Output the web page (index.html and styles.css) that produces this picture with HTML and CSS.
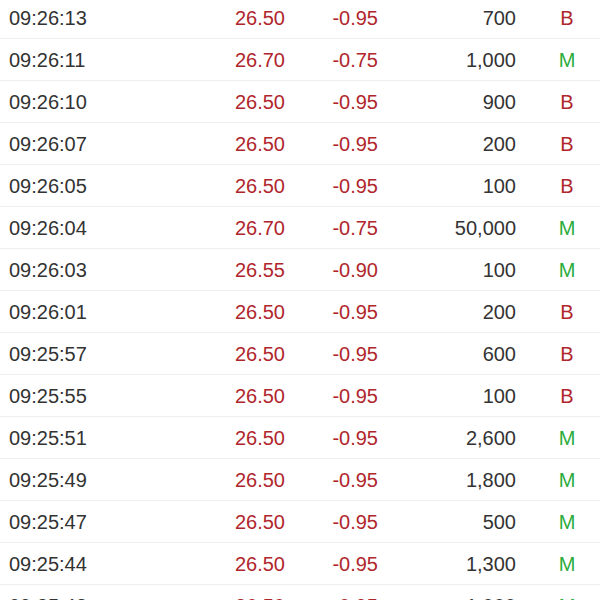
FILE: index.html
```html
<!DOCTYPE html>
<html>
<head>
<meta charset="utf-8">
<link rel="stylesheet" href="styles.css">
</head>
<body>
<div class="list">
  <div class="row"><span class="time">09:26:13</span><span class="price">26.50</span><span class="chg">-0.95</span><span class="vol">700</span><span class="side b">B</span></div>
  <div class="row"><span class="time">09:26:11</span><span class="price">26.70</span><span class="chg">-0.75</span><span class="vol">1,000</span><span class="side m">M</span></div>
  <div class="row"><span class="time">09:26:10</span><span class="price">26.50</span><span class="chg">-0.95</span><span class="vol">900</span><span class="side b">B</span></div>
  <div class="row"><span class="time">09:26:07</span><span class="price">26.50</span><span class="chg">-0.95</span><span class="vol">200</span><span class="side b">B</span></div>
  <div class="row"><span class="time">09:26:05</span><span class="price">26.50</span><span class="chg">-0.95</span><span class="vol">100</span><span class="side b">B</span></div>
  <div class="row"><span class="time">09:26:04</span><span class="price">26.70</span><span class="chg">-0.75</span><span class="vol">50,000</span><span class="side m">M</span></div>
  <div class="row"><span class="time">09:26:03</span><span class="price">26.55</span><span class="chg">-0.90</span><span class="vol">100</span><span class="side m">M</span></div>
  <div class="row"><span class="time">09:26:01</span><span class="price">26.50</span><span class="chg">-0.95</span><span class="vol">200</span><span class="side b">B</span></div>
  <div class="row"><span class="time">09:25:57</span><span class="price">26.50</span><span class="chg">-0.95</span><span class="vol">600</span><span class="side b">B</span></div>
  <div class="row"><span class="time">09:25:55</span><span class="price">26.50</span><span class="chg">-0.95</span><span class="vol">100</span><span class="side b">B</span></div>
  <div class="row"><span class="time">09:25:51</span><span class="price">26.50</span><span class="chg">-0.95</span><span class="vol">2,600</span><span class="side m">M</span></div>
  <div class="row"><span class="time">09:25:49</span><span class="price">26.50</span><span class="chg">-0.95</span><span class="vol">1,800</span><span class="side m">M</span></div>
  <div class="row"><span class="time">09:25:47</span><span class="price">26.50</span><span class="chg">-0.95</span><span class="vol">500</span><span class="side m">M</span></div>
  <div class="row"><span class="time">09:25:44</span><span class="price">26.50</span><span class="chg">-0.95</span><span class="vol">1,300</span><span class="side m">M</span></div>
  <div class="row"><span class="time">09:25:42</span><span class="price">26.50</span><span class="chg">-0.95</span><span class="vol">1,000</span><span class="side m">M</span></div>
</div>
</body>
</html>
```
FILE: styles.css
```css
html, body {
  margin: 0;
  padding: 0;
  background: #fff;
  overflow: hidden;
}
body {
  font-family: "Liberation Sans", Arial, sans-serif;
  font-size: 20px;
  color: #333;
}
.list {
  margin-top: -3px;
}
.row {
  display: flex;
  align-items: center;
  height: 41px;
  border-bottom: 1px solid #eeeeee;
}
.row > span {
  flex: none;
  padding-top: 1px;
}
.time {
  width: 100px;
  padding-left: 9px;
  color: #333;
}
.price {
  width: 176px;
  text-align: right;
  color: #b0262c;
}
.chg {
  width: 93px;
  text-align: right;
  color: #b0262c;
}
.vol {
  width: 138px;
  text-align: right;
  color: #333;
}
.side {
  width: 102px;
  text-align: center;
}
.side.b { color: #b0262c; }
.side.m { color: #2aac3c; }
```
